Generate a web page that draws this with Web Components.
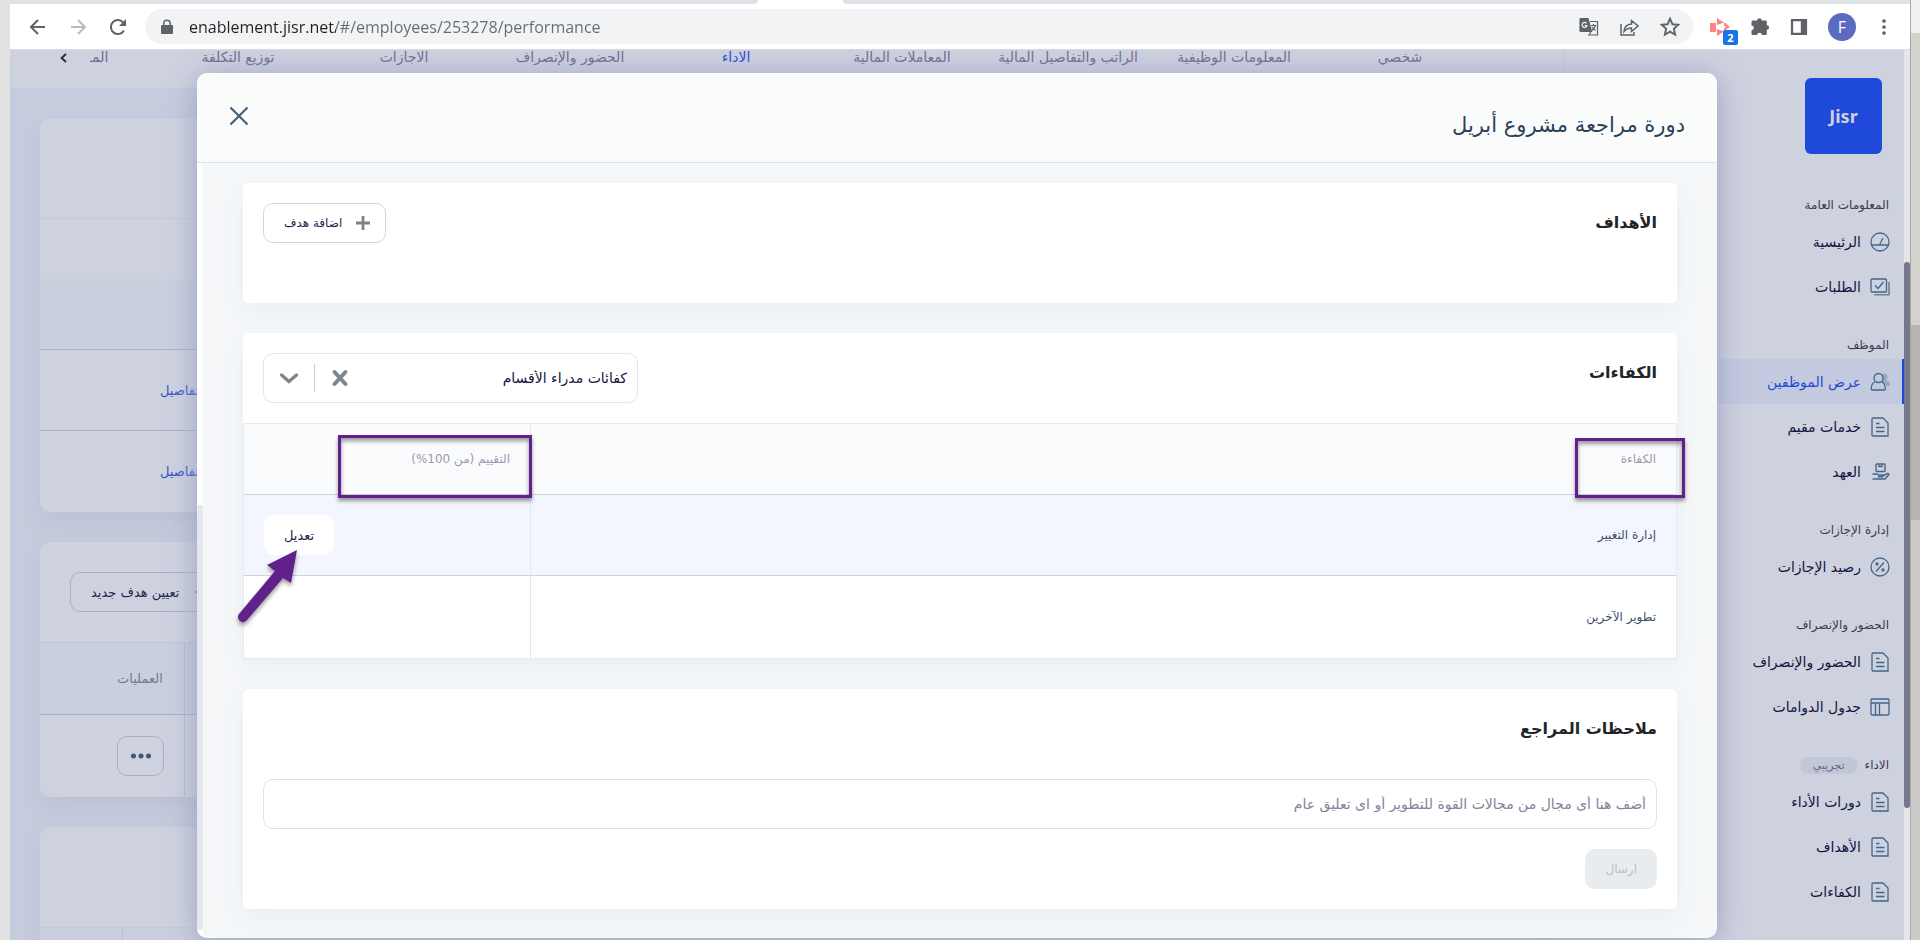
<!DOCTYPE html>
<html lang="ar">
<head>
<meta charset="utf-8">
<title>Jisr</title>
<style>
  body {
    margin: 0;
    height: 100vh;
    overflow: hidden;
    background: linear-gradient(#f0f0ee 33px, #d3d2cd 33px, #d3d2cd 325px, #b6b5af 325px, #b6b5af 520px, #cccbc8 520px);
    font-family: "DejaVu Sans", "Noto Sans", sans-serif;
  }
</style>
</head>
<body>
<browser-window>
  <browser-toolbar slot="toolbar"></browser-toolbar>
  <app-shell>
    <side-nav slot="nav">
      <nav-group heading="المعلومات العامة">
        <nav-item icon="gauge">الرئيسية</nav-item>
        <nav-item icon="check">الطلبات</nav-item>
      </nav-group>
      <nav-group heading="الموظف">
        <nav-item icon="users" active>عرض الموظفين</nav-item>
        <nav-item icon="doc">خدمات مقيم</nav-item>
        <nav-item icon="hand">العهد</nav-item>
      </nav-group>
      <nav-group heading="إدارة الإجازات">
        <nav-item icon="percent">رصيد الإجازات</nav-item>
      </nav-group>
      <nav-group heading="الحضور والإنصراف">
        <nav-item icon="doc">الحضور والإنصراف</nav-item>
        <nav-item icon="table">جدول الدوامات</nav-item>
      </nav-group>
      <nav-group heading="الاداء" badge="تجريبي">
        <nav-item icon="doc">دورات الأداء</nav-item>
        <nav-item icon="doc">الأهداف</nav-item>
        <nav-item icon="doc">الكفاءات</nav-item>
      </nav-group>
    </side-nav>
    <tab-strip>
      <tab-link>شخصي</tab-link>
      <tab-link>المعلومات الوظيفية</tab-link>
      <tab-link>الراتب والتفاصيل المالية</tab-link>
      <tab-link>المعاملات المالية</tab-link>
      <tab-link active>الاداء</tab-link>
      <tab-link>الحضور والإنصراف</tab-link>
      <tab-link>الاجازات</tab-link>
      <tab-link>توزيع التكلفة</tab-link>
      <tab-link last>المـ</tab-link>
    </tab-strip>
    <performance-page></performance-page>
    <review-dialog slot="dialog" heading="دورة مراجعة مشروع أبريل">
      <review-card heading="الأهداف" tall>
        <add-button slot="action">اضافة هدف</add-button>
      </review-card>
      <review-card heading="الكفاءات">
        <clearable-select slot="action"></clearable-select>
        <competency-table slot="flush"></competency-table>
      </review-card>
      <review-card heading="ملاحظات المراجع">
        <notes-form></notes-form>
      </review-card>
    </review-dialog>
  </app-shell>
</browser-window>

<script>
const icons = {
  back: ['#5f6368', 2, '<path d="M17 10H3.500M10 3L3 10l7 7"/>'],
  forward: ['#b9bbbe', 2, '<path d="M3 10h13.500M10 3l7 7-7 7"/>'],
  reload: ['#5f6368', 2, '<path d="M16 13.500A7 7 0 1 1 15.500 5.800"/><path fill="#5f6368" stroke="none" d="M18 2v7h-7z"/>'],
  lock: ['none', 0, '<path fill="#5f6368" d="M5 8h1V6.500a4 4 0 0 1 8 0V8h1q1 0 1 1v7q0 1-1 1H5q-1 0-1-1V9q0-1 1-1zm2.500 0h5V6.500a2.500 2.500 0 0 0-5 0z"/>'],
  translate: ['#5f6368', 1.2, '<path fill="#5f6368" d="M2 1.500h7l3.500 13H2q-1 0-1-1v-11q0-1 1-1z"/><path d="M11 4.500h7.500v13.500H10l2-3.500"/><path stroke="#f1f3f4" d="M7.500 6.300A2.500 2.500 0 1 0 8 8.500H5.800"/><path d="M12 8.500h5.500M14.500 7v1.500M16.500 8.500q-1 3-3.500 5M13 10q1 2 3.500 3.500"/>'],
  share: ['#5f6368', 1.5, '<path d="M2 7v11h13v-3"/><path d="M5 14.500q.5-7 7.500-7.500V3.500L19 9l-6.500 5.500V11Q8 11 5 14.500z"/>'],
  star: ['#5f6368', 1.7, '<path d="M10 2.500l2.200 5 5.300.5-4 3.600 1.200 5.400L10 14.200 5.300 17l1.200-5.400-4-3.600 5.300-.5z"/>'],
  puzzle: ['none', 0, '<path fill="#5f6368" d="M7.200 3.500a2.300 2.300 0 0 1 4.600 0h3.700q1.300 0 1.300 1.300v3.400a2.300 2.300 0 0 1 0 4.600v4q0 1.300-1.300 1.300h-3.600a2.400 2.400 0 0 0-4.800 0H2.800q-1.300 0-1.300-1.300v-3.600a2.400 2.400 0 0 0 0-4.800V4.800q0-1.300 1.300-1.300z"/>'],
  panel: ['none', 0, '<path fill="#5f6368" fill-rule="evenodd" d="M1 1h18v18H1zM3.500 3.500v13H12v-13z"/>'],
  kebab: ['none', 0, '<g fill="#5f6368"><circle cx="10" cy="2.500" r="2.300"/><circle cx="10" cy="10" r="2.300"/><circle cx="10" cy="17.500" r="2.300"/></g>'],
  recorder: ['none', 0, '<g fill="#fd8484"><path d="M0 6h6v9H0zM7 1l7 4.500L7 8zM7 19l7-4.500L7 12z"/><path d="M14 5l6 5-6 4v-2.500l2-1.500-2-1.500z"/></g>'],
  gauge: ['#44658b', 1.3, '<circle cx="10" cy="10" r="9"/><path d="M1.500 13h17M9.500 13L13 6"/>'],
  check: ['#44658b', 1.3, '<rect x="1" y="2" width="15.500" height="13" rx="1"/><path d="M5 8.500l3 3L13.500 5"/><path stroke="#6c84a4" stroke-width="1.600" d="M19 5v12.800H4"/>'],
  users: ['#44658b', 1.3, '<path stroke="none" fill="#9aa6bd" d="M13 1.500q4-.5 4.500 3 .3 3-1.500 4 4 1 4.500 4.500-1 1.500-4 1-1-4-4.500-4.500z"/><circle cx="8.500" cy="6" r="4.500"/><path d="M5.500 9.500Q1 11.500 1.300 17q0 1 1 1H14q1.300 0 1.300-1 .2-5.500-4-7.500"/>'],
  doc: ['#44658b', 1.3, '<path d="M3 1h10l5 5v13H3q-1 0-1-1V2q0-1 1-1zM6 6.500h3.500M6 10.500h8.500M6 14.500h8.500"/>'],
  hand: ['#44658b', 1.4, '<rect x="6" y="2" width="9" height="7.500" rx="1"/><path d="M9 2.500v2h3v-2M2.500 12h4q1 0 2 1h4v1.800H8M12.500 14l5-2.500q2 0 1 1.500L15 17H2.500"/>'],
  percent: ['#44658b', 1.3, '<circle cx="10" cy="10" r="9"/><path d="M6 14.500l8-9"/><circle cx="7" cy="7" r="1"/><circle cx="13" cy="13" r="1"/>'],
  table: ['#44658b', 1.3, '<rect x="1" y="2" width="18" height="16" rx="1"/><path d="M1 6h18M5.500 6v12M9.500 6v12"/>'],
  close: ['#44607a', 2.2, '<path d="M1.500 1.500l17 17M18.500 1.500l-17 17"/>'],
  cross: ['#7b868f', 4, '<path d="M4.500 4l11 12M15.500 4l-11 12" stroke-linecap="round"/>'],
  chevron: ['#7b868f', 3.4, '<path d="M2.500 7l7.500 6.500L17.500 7" stroke-linecap="round"/>'],
  plus: ['#7b8089', 2.8, '<path d="M10 3v14M3 10h14"/>'],
  left: ['#2a2a3c', 2.4, '<path d="M12.500 5l-5.500 5 5.500 5"/>'],
  dots: ['none', 0, '<g fill="#3c5878"><circle cx="2.500" cy="10" r="2.500"/><circle cx="10" cy="10" r="2.500"/><circle cx="17.500" cy="10" r="2.500"/></g>']
}

function icon(name, size = 20) {
  const [stroke, width, shapes] = icons[name]
  return `<svg width="${size}" height="${size}" viewBox="0 0 20 20" fill="none" stroke="${stroke}" stroke-width="${width}" aria-hidden="true">${shapes}</svg>`
}

// Registers a tag whose shadow root comes from a function of the element.
function define(tag, render) {
  customElements.define(tag, class extends HTMLElement {
    constructor() {
      super();
      this.attachShadow({ mode: 'open' });
      const template = document.createElement('template')
      template.innerHTML = `
      <style>
        * { box-sizing: border-box; }
        svg { display: block; flex: none; }
        button, input, select { font: inherit; color: inherit; margin: 0; }
        button { cursor: pointer; }
      </style>
      ${render(this)}
      `
      this.shadowRoot.appendChild(template.content.cloneNode(true))
    }
  })
}

define('browser-window', () => `
  <style>
    :host {
      display: flex;
      flex-direction: column;
      box-sizing: border-box;
      height: 100vh;
      margin-right: 9px;
      border-left: 10px solid #e2e2e2;
      border-right: 1px solid #a9a9a8;
    }
  </style>
  <slot name="toolbar"></slot>
  <slot></slot>
`)

define('browser-toolbar', () => `
  <style>
    :host { display: block; flex: none; background: #fff; border-bottom: 1px solid #d8dbe1; }
    .tabs { display: flex; height: 4px; }
    .tabs i { background: #dee1e6; }
    .tabs i:first-child { flex: 0 0 748px; border-radius: 0 0 6px 0; }
    .tabs i:last-child { flex: 1; margin-left: 85px; border-radius: 0 0 0 6px; }
    .bar { display: flex; align-items: center; gap: 20px; padding: 5px 18px; }
    button { display: block; padding: 0; border: 0; background: none; position: relative; }
    form {
      flex: 1;
      display: flex;
      align-items: center;
      gap: 20px;
      height: 35px;
      margin: 0 -3px;
      padding: 0 12px;
      border-radius: 18px;
      background: #f1f3f4;
    }
    input {
      flex: 1;
      min-width: 0;
      padding: 0;
      border: 0;
      outline: 0;
      margin-left: -8px;
      font: 16px/24px "Open Sans", "Noto Sans", sans-serif;
      background: linear-gradient(90deg, #202124 147px, #666a6e 147px);
      -webkit-background-clip: text;
      background-clip: text;
      color: transparent;
    }
    b {
      position: absolute;
      left: 13px;
      top: 13px;
      width: 15px;
      border-radius: 2px;
      background: #1a73e8;
      color: #fff;
      font: bold 11px/15px "Open Sans", sans-serif;
    }
    .avatar {
      width: 28px;
      height: 28px;
      border-radius: 50%;
      background: #5c6bc0;
      color: #fff;
      font: 16px/28px "Open Sans", sans-serif;
    }
  </style>
  <div class="tabs"><i></i><i></i></div>
  <div class="bar">
    <button aria-label="Back">${icon('back')}</button>
    <button aria-label="Forward">${icon('forward')}</button>
    <button aria-label="Reload">${icon('reload')}</button>
    <form>
      ${icon('lock')}
      <input aria-label="Address" value="enablement.jisr.net/#/employees/253278/performance">
      <button type="button" aria-label="Translate">${icon('translate')}</button>
      <button type="button" aria-label="Share">${icon('share')}</button>
      <button type="button" aria-label="Bookmark">${icon('star', 22)}</button>
    </form>
    <button aria-label="Recorder">${icon('recorder')}<b>2</b></button>
    <button aria-label="Extensions">${icon('puzzle')}</button>
    <button aria-label="Side panel">${icon('panel', 18)}</button>
    <button class="avatar">F</button>
    <button aria-label="Menu">${icon('kebab', 16)}</button>
  </div>
`)

define('app-shell', () => `
  <style>
    :host { display: flex; flex: 1; min-height: 0; position: relative; background: #c6ccde; }
    main { flex: 1; min-width: 0; display: flex; flex-direction: column; overflow: hidden; }
    .scroll { flex: 0 0 6px; background: #e6e6ea; padding-top: 212px; }
    .scroll i { display: block; height: 546px; border-radius: 3px; background: #77778d; }
    /* the dialog lies over the page */
    .overlay { position: absolute; inset: 0 6px 0 0; display: flex; justify-content: center; align-items: flex-start; padding-top: 23px; }
  </style>
  <main><slot></slot></main>
  <slot name="nav"></slot>
  <div class="scroll"><i></i></div>
  <div class="overlay"><slot name="dialog"></slot></div>
`)

define('side-nav', () => `
  <style>
    :host { display: block; box-sizing: border-box; flex: 0 0 340px; direction: rtl; overflow: hidden; background: #ced2df; border-left: 1px solid #c3c7d8; }
    .logo {
      width: 77px;
      margin: 28px 22px 37px;
      border-radius: 6px;
      background: #1f49d8;
      color: #ced2df;
      font: bold 18px/76px "Noto Sans", sans-serif;
      text-align: center;
    }
  </style>
  <div class="logo">Jisr</div>
  <slot></slot>
`)

define('nav-group', el => `
  <style>
    :host { display: block; margin-bottom: 22px; }
    h2 { display: flex; align-items: center; gap: 7px; height: 28px; margin: 0; padding: 0 15px; color: #3b3b52; font-size: 12px; font-weight: normal; }
    span { padding: 0 13px; border-radius: 9px; background: #c2c7d6; color: #65658a; font-size: 11px; line-height: 17px; }
  </style>
  <h2>${el.getAttribute('heading')}${el.hasAttribute('badge') ? `<span>${el.getAttribute('badge')}</span>` : ''}</h2>
  <slot></slot>
`)

define('nav-item', el => `
  <style>
    :host { display: block; }
    a { display: flex; align-items: center; gap: 9px; height: 45px; padding: 0 14px; color: #14143f; font-size: 14px; text-decoration: none; }
    :host([active]) a { padding-right: 12px; border-right: 2px solid #1f49d8; background: #c3c9df; color: #1f49d8; }
  </style>
  <a href="#">${icon(el.getAttribute('icon'))}<span><slot></slot></span></a>
`)

define('tab-strip', () => `
  <style>
    :host { display: flex; flex: 0 0 38px; direction: rtl; padding-right: 81px; background: #ced2df; }
    nav { display: flex; flex: 1; min-width: 0; overflow: hidden; }
    button { flex: 0 0 80px; height: 16px; padding: 0 18px; border: 0; background: none; }
  </style>
  <nav><slot></slot></nav>
  <button aria-label="المزيد">${icon('left', 16)}</button>
`)

define('tab-link', () => `
  <style>
    :host { display: block; flex: 0 0 166px; text-align: center; line-height: 14px; }
    :host([last]) { flex: 0 0 67px; text-align: left; }
    a { color: #6c6c8f; font-size: 14px; text-decoration: none; white-space: nowrap; }
    :host([active]) a { color: #1f49d8; }
  </style>
  <a href="#"><slot></slot></a>
`)

define('performance-page', () => `
  <style>
    :host { display: flex; flex-direction: column; gap: 30px; padding: 30px; font-size: 13px; }
    section { border-radius: 10px; background: #ced2df; box-shadow: 0 10px 24px #bcc0d5; overflow: hidden; }
    .rule { height: 101px; border-bottom: 1px solid #c4c9d8; }
    .title { height: 60px; }
    .band { height: 71px; background: #c9cfdd; border-bottom: 1px solid #a9b0c7; }
    .row { display: flex; align-items: center; height: 81px; padding-left: 120px; border-bottom: 1px solid #a9b0c7; }
    .row:last-child { border: 0; }
    a { color: #3450c8; text-decoration: none; }
    .head { display: flex; align-items: center; height: 101px; padding: 0 30px; border-bottom: 1px solid #c0c5d5; }
    button { display: flex; align-items: center; justify-content: center; gap: 14px; height: 40px; padding: 0 20px; border: 1px solid #aaaec8; border-radius: 10px; background: none; color: #25254a; }
    table { width: 100%; border-collapse: collapse; }
    th, td { height: 71px; padding: 0; border-bottom: 1px solid #a9b0c7; font-weight: normal; }
    td { height: 83px; border: 0; }
    th:first-child, td:first-child { width: 144px; padding: 0 20px 0 77px; border-right: 1px solid #b9bed1; text-align: left; }
    th { background: #c9cfdd; color: #767990; }
    td button { width: 47px; padding: 0; }
    .last { flex: none; height: 200px; }
    .split { width: 83px; height: 100px; border-right: 1px solid #b9bed1; }
    .tint { background: #c9cfdd; }
  </style>
  <section>
    <div class="rule"></div>
    <div class="title"></div>
    <div class="band"></div>
    <div class="row"><a href="#">التفاصيل</a></div>
    <div class="row"><a href="#">التفاصيل</a></div>
  </section>
  <section>
    <div class="head"><button dir="rtl">${icon('plus', 16)}تعيين هدف جديد</button></div>
    <table>
      <tr><th>العمليات</th><th></th></tr>
      <tr><td><button aria-label="خيارات">${icon('dots')}</button></td><td></td></tr>
    </table>
  </section>
  <section class="last">
    <div class="rule"></div>
    <div class="tint"><div class="split"></div></div>
  </section>
`)

define('review-dialog', el => `
  <style>
    :host { display: block; width: 1520px; max-width: 81%; direction: rtl; border-radius: 10px; background: #f5f7f9; box-shadow: 0 4px 30px #9a9fc0; overflow: hidden; }
    header { display: flex; align-items: center; justify-content: space-between; height: 90px; padding: 0 32px; border-bottom: 1px solid #dde2ea; background: #fafcfc; }
    h1 { margin: 0; padding-top: 14px; color: #2c405a; font-size: 21px; line-height: 30px; font-weight: normal; }
    button { margin-bottom: 4px; padding: 0; border: 0; background: none; }
    .body { display: flex; }
    .cards { flex: 1; min-width: 0; display: flex; flex-direction: column; gap: 30px; padding: 20px 40px 29px; }
    .scroll { flex: 0 0 6px; display: flex; flex-direction: column; justify-content: flex-end; padding-bottom: 8px; background: #fff; }
    .scroll i { height: 425px; border-radius: 3px; background: #e4e7ed; }
  </style>
  <header><h1>${el.getAttribute('heading')}</h1><button aria-label="إغلاق">${icon('close')}</button></header>
  <div class="body">
    <div class="cards"><slot></slot></div>
    <div class="scroll"><i></i></div>
  </div>
`)

define('review-card', el => `
  <style>
    :host { display: block; border-radius: 5px; background: #fff; box-shadow: 0 8px 24px #e9eef2; }
    :host([tall]) { min-height: 120px; }
    header { display: flex; justify-content: space-between; padding: 20px; }
    h2 { margin: 0; color: #212529; font-size: 16px; line-height: 40px; }
  </style>
  <header><h2>${el.getAttribute('heading')}</h2><slot name="action"></slot></header>
  <slot></slot>
  <slot name="flush"></slot>
`)

define('add-button', () => `
  <style>
    button { display: flex; align-items: center; gap: 11px; height: 40px; padding: 0 20px; padding-inline-start: 12px; border: 1px solid #d2d5dd; border-radius: 10px; background: #fff; color: #25254a; font-size: 12px; }
  </style>
  <button>${icon('plus')}<slot></slot></button>
`)

define('clearable-select', () => `
  <style>
    :host { display: flex; align-items: center; box-sizing: border-box; width: 375px; height: 50px; border: 1px solid #e3e5e8; border-radius: 10px; }
    select { flex: 1; height: 48px; padding: 0 10px; border: 0; outline: 0; background: none; appearance: none; color: #14143f; font-size: 14px; }
    button { padding: 0 15px; border: 0; background: none; }
    i { height: 28px; border-left: 1px solid #ccc; }
    span { padding: 0 15px; }
  </style>
  <select aria-label="الكفاءات"><option>كفائات مدراء الأقسام</option></select>
  <button aria-label="مسح">${icon('cross')}</button>
  <i></i>
  <span>${icon('chevron')}</span>
`)

define('competency-table', () => `
  <style>
    :host { display: block; position: relative; font-size: 12px; }
    table { width: 100%; border: 1px solid #e6e9ed; border-collapse: separate; border-spacing: 0; }
    th, td { height: 81px; padding: 0 20px; border-bottom: 1px solid #ced3e0; color: #3c5068; font-weight: normal; text-align: right; }
    th { height: 71px; background: #fafbfd; color: #9a9aac; }
    tr:last-child td { height: 82px; border-bottom: 0; }
    th:last-child, td:last-child { width: 287px; border-right: 1px solid #e3e7ec; }
    .hover td { background: #f3f6fe; }
    button { float: left; height: 40px; padding: 0 20px; border: 0; border-radius: 10px; background: #fff; color: #25254a; font-size: 13px; }
    /* purple marks drawn over the table */
    .mark { position: absolute; border: 3px solid #62208a; box-shadow: 0 3px 4px #0006, inset 0 3px 4px #0006; }
    .score { left: 95px; top: 12px; width: 194px; height: 63px; }
    .name { right: -8px; top: 15px; width: 110px; height: 60px; }
    .arrow { position: absolute; left: -8px; top: 124px; filter: drop-shadow(0 3px 2px #0006); }
  </style>
  <table>
    <tr><th>الكفاءة</th><th>التقييم (من 100%)</th></tr>
    <tr class="hover"><td>إدارة التغيير</td><td><button>تعديل</button></td></tr>
    <tr><td>تطوير الآخرين</td><td></td></tr>
  </table>
  <div class="mark score"></div>
  <div class="mark name"></div>
  <svg class="arrow" width="64" height="80" viewBox="0 0 64 80" fill="#62208a" aria-hidden="true">
    <path d="M62 3L32 18l8 6L4 67a5 5 0 0 0 8 6l36-42 8 5z"/>
  </svg>
`)

define('notes-form', () => `
  <style>
    form { display: flex; flex-direction: column; align-items: flex-start; gap: 20px; padding: 10px 20px 20px; }
    input { width: 100%; height: 50px; padding: 0 10px; border: 1px solid #e0e2e6; border-radius: 10px; outline: 0; background: #fff; font-size: 14px; }
    input::placeholder { color: #83839a; opacity: 1; }
    button { height: 40px; padding: 0 20px; border: 0; border-radius: 10px; background: #e8ecef; color: #bcbcc8; font-size: 12px; }
  </style>
  <form>
    <input aria-label="ملاحظات المراجع" placeholder="أضف هنا أى مجال من مجالات القوة للتطوير أو اى تعليق عام">
    <button type="button" disabled>ارسال</button>
  </form>
`)
</script>
</body>
</html>
